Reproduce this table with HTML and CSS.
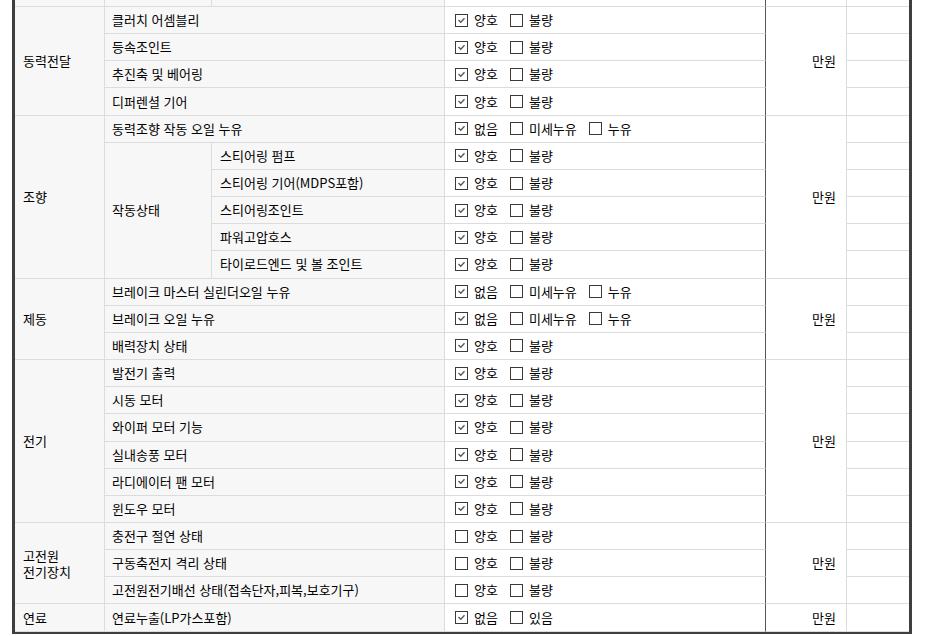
FILE: index.html
```html
<!DOCTYPE html>
<html lang="ko">
<head>
<meta charset="utf-8">
<title>점검표</title>
<link rel="stylesheet" href="styles.css">
</head>
<body>
<div class="wrap">
<table class="sheet">
  <colgroup>
    <col class="c1"><col class="c2"><col class="c3"><col class="c4"><col class="c5"><col class="c6">
  </colgroup>
  <tbody>
    <tr class="toprow">
      <td class="th"></td><td class="th"></td><td class="th"></td><td class="chk"></td><td class="cost"></td><td class="last"></td>
    </tr>

    <tr>
      <td class="th cat" rowspan="4">동력전달</td>
      <td class="th sub" colspan="2">클러치 어셈블리</td>
      <td class="chk"><div class="opts"><span class="opt"><span class="box on"><svg viewBox="0 0 11 11"><polyline points="2.5,5 4.8,7.3 8.5,3.3"/></svg></span>양호</span><span class="opt"><span class="box"></span>불량</span></div></td>
      <td class="cost" rowspan="4">만원</td>
      <td class="last"></td>
    </tr>
    <tr>
      <td class="th sub" colspan="2">등속조인트</td>
      <td class="chk"><div class="opts"><span class="opt"><span class="box on"><svg viewBox="0 0 11 11"><polyline points="2.5,5 4.8,7.3 8.5,3.3"/></svg></span>양호</span><span class="opt"><span class="box"></span>불량</span></div></td>
      <td class="last"></td>
    </tr>
    <tr>
      <td class="th sub" colspan="2">추진축 및 베어링</td>
      <td class="chk"><div class="opts"><span class="opt"><span class="box on"><svg viewBox="0 0 11 11"><polyline points="2.5,5 4.8,7.3 8.5,3.3"/></svg></span>양호</span><span class="opt"><span class="box"></span>불량</span></div></td>
      <td class="last"></td>
    </tr>
    <tr>
      <td class="th sub" colspan="2">디퍼렌셜 기어</td>
      <td class="chk"><div class="opts"><span class="opt"><span class="box on"><svg viewBox="0 0 11 11"><polyline points="2.5,5 4.8,7.3 8.5,3.3"/></svg></span>양호</span><span class="opt"><span class="box"></span>불량</span></div></td>
      <td class="last"></td>
    </tr>

    <tr>
      <td class="th cat" rowspan="6">조향</td>
      <td class="th sub" colspan="2">동력조향 작동 오일 누유</td>
      <td class="chk"><div class="opts"><span class="opt"><span class="box on"><svg viewBox="0 0 11 11"><polyline points="2.5,5 4.8,7.3 8.5,3.3"/></svg></span>없음</span><span class="opt"><span class="box"></span>미세누유</span><span class="opt"><span class="box"></span>누유</span></div></td>
      <td class="cost" rowspan="6">만원</td>
      <td class="last"></td>
    </tr>
    <tr>
      <td class="th sub" rowspan="5">작동상태</td>
      <td class="th item">스티어링 펌프</td>
      <td class="chk"><div class="opts"><span class="opt"><span class="box on"><svg viewBox="0 0 11 11"><polyline points="2.5,5 4.8,7.3 8.5,3.3"/></svg></span>양호</span><span class="opt"><span class="box"></span>불량</span></div></td>
      <td class="last"></td>
    </tr>
    <tr>
      <td class="th item">스티어링 기어(MDPS포함)</td>
      <td class="chk"><div class="opts"><span class="opt"><span class="box on"><svg viewBox="0 0 11 11"><polyline points="2.5,5 4.8,7.3 8.5,3.3"/></svg></span>양호</span><span class="opt"><span class="box"></span>불량</span></div></td>
      <td class="last"></td>
    </tr>
    <tr>
      <td class="th item">스티어링조인트</td>
      <td class="chk"><div class="opts"><span class="opt"><span class="box on"><svg viewBox="0 0 11 11"><polyline points="2.5,5 4.8,7.3 8.5,3.3"/></svg></span>양호</span><span class="opt"><span class="box"></span>불량</span></div></td>
      <td class="last"></td>
    </tr>
    <tr>
      <td class="th item">파워고압호스</td>
      <td class="chk"><div class="opts"><span class="opt"><span class="box on"><svg viewBox="0 0 11 11"><polyline points="2.5,5 4.8,7.3 8.5,3.3"/></svg></span>양호</span><span class="opt"><span class="box"></span>불량</span></div></td>
      <td class="last"></td>
    </tr>
    <tr>
      <td class="th item">타이로드엔드 및 볼 조인트</td>
      <td class="chk"><div class="opts"><span class="opt"><span class="box on"><svg viewBox="0 0 11 11"><polyline points="2.5,5 4.8,7.3 8.5,3.3"/></svg></span>양호</span><span class="opt"><span class="box"></span>불량</span></div></td>
      <td class="last"></td>
    </tr>

    <tr>
      <td class="th cat" rowspan="3">제동</td>
      <td class="th sub" colspan="2">브레이크 마스터 실린더오일 누유</td>
      <td class="chk"><div class="opts"><span class="opt"><span class="box on"><svg viewBox="0 0 11 11"><polyline points="2.5,5 4.8,7.3 8.5,3.3"/></svg></span>없음</span><span class="opt"><span class="box"></span>미세누유</span><span class="opt"><span class="box"></span>누유</span></div></td>
      <td class="cost" rowspan="3">만원</td>
      <td class="last"></td>
    </tr>
    <tr>
      <td class="th sub" colspan="2">브레이크 오일 누유</td>
      <td class="chk"><div class="opts"><span class="opt"><span class="box on"><svg viewBox="0 0 11 11"><polyline points="2.5,5 4.8,7.3 8.5,3.3"/></svg></span>없음</span><span class="opt"><span class="box"></span>미세누유</span><span class="opt"><span class="box"></span>누유</span></div></td>
      <td class="last"></td>
    </tr>
    <tr>
      <td class="th sub" colspan="2">배력장치 상태</td>
      <td class="chk"><div class="opts"><span class="opt"><span class="box on"><svg viewBox="0 0 11 11"><polyline points="2.5,5 4.8,7.3 8.5,3.3"/></svg></span>양호</span><span class="opt"><span class="box"></span>불량</span></div></td>
      <td class="last"></td>
    </tr>

    <tr>
      <td class="th cat" rowspan="6">전기</td>
      <td class="th sub" colspan="2">발전기 출력</td>
      <td class="chk"><div class="opts"><span class="opt"><span class="box on"><svg viewBox="0 0 11 11"><polyline points="2.5,5 4.8,7.3 8.5,3.3"/></svg></span>양호</span><span class="opt"><span class="box"></span>불량</span></div></td>
      <td class="cost" rowspan="6">만원</td>
      <td class="last"></td>
    </tr>
    <tr>
      <td class="th sub" colspan="2">시동 모터</td>
      <td class="chk"><div class="opts"><span class="opt"><span class="box on"><svg viewBox="0 0 11 11"><polyline points="2.5,5 4.8,7.3 8.5,3.3"/></svg></span>양호</span><span class="opt"><span class="box"></span>불량</span></div></td>
      <td class="last"></td>
    </tr>
    <tr>
      <td class="th sub" colspan="2">와이퍼 모터 기능</td>
      <td class="chk"><div class="opts"><span class="opt"><span class="box on"><svg viewBox="0 0 11 11"><polyline points="2.5,5 4.8,7.3 8.5,3.3"/></svg></span>양호</span><span class="opt"><span class="box"></span>불량</span></div></td>
      <td class="last"></td>
    </tr>
    <tr>
      <td class="th sub" colspan="2">실내송풍 모터</td>
      <td class="chk"><div class="opts"><span class="opt"><span class="box on"><svg viewBox="0 0 11 11"><polyline points="2.5,5 4.8,7.3 8.5,3.3"/></svg></span>양호</span><span class="opt"><span class="box"></span>불량</span></div></td>
      <td class="last"></td>
    </tr>
    <tr>
      <td class="th sub" colspan="2">라디에이터 팬 모터</td>
      <td class="chk"><div class="opts"><span class="opt"><span class="box on"><svg viewBox="0 0 11 11"><polyline points="2.5,5 4.8,7.3 8.5,3.3"/></svg></span>양호</span><span class="opt"><span class="box"></span>불량</span></div></td>
      <td class="last"></td>
    </tr>
    <tr>
      <td class="th sub" colspan="2">윈도우 모터</td>
      <td class="chk"><div class="opts"><span class="opt"><span class="box on"><svg viewBox="0 0 11 11"><polyline points="2.5,5 4.8,7.3 8.5,3.3"/></svg></span>양호</span><span class="opt"><span class="box"></span>불량</span></div></td>
      <td class="last"></td>
    </tr>

    <tr>
      <td class="th cat" rowspan="3"><span class="two">고전원<br>전기장치</span></td>
      <td class="th sub" colspan="2">충전구 절연 상태</td>
      <td class="chk"><div class="opts"><span class="opt"><span class="box"></span>양호</span><span class="opt"><span class="box"></span>불량</span></div></td>
      <td class="cost" rowspan="3">만원</td>
      <td class="last"></td>
    </tr>
    <tr>
      <td class="th sub" colspan="2">구동축전지 격리 상태</td>
      <td class="chk"><div class="opts"><span class="opt"><span class="box"></span>양호</span><span class="opt"><span class="box"></span>불량</span></div></td>
      <td class="last"></td>
    </tr>
    <tr>
      <td class="th sub" colspan="2">고전원전기배선 상태(접속단자,피복,보호기구)</td>
      <td class="chk"><div class="opts"><span class="opt"><span class="box"></span>양호</span><span class="opt"><span class="box"></span>불량</span></div></td>
      <td class="last"></td>
    </tr>

    <tr>
      <td class="th cat">연료</td>
      <td class="th sub" colspan="2">연료누출(LP가스포함)</td>
      <td class="chk"><div class="opts"><span class="opt"><span class="box on"><svg viewBox="0 0 11 11"><polyline points="2.5,5 4.8,7.3 8.5,3.3"/></svg></span>없음</span><span class="opt"><span class="box"></span>있음</span></div></td>
      <td class="cost">만원</td>
      <td class="last"></td>
    </tr>
  </tbody>
</table>
</div>
</body>
</html>
```

FILE: styles.css
```css
html, body {
  margin: 0;
  padding: 0;
  background: #ffffff;
}

body {
  font-family: "Noto Sans CJK KR", "Noto Sans", sans-serif;
  font-size: 13px;
  color: #000000;
  overflow: hidden;
}

.wrap {
  padding-left: 12px;
  margin-top: -20px;
}

.sheet {
  table-layout: fixed;
  width: 900px;
  border-collapse: separate;
  border-spacing: 0;
  border-left: 3px solid #3e3e42;
  border-right: 3px solid #3e3e42;
  border-bottom: 2px solid #3e3e42;
}

.c1 { width: 90px; }
.c2 { width: 107px; }
.c3 { width: 233px; }
.c4 { width: 321px; }
.c5 { width: 81px; }
.c6 { width: 62px; }

.sheet tr {
  height: 27.17px;
}

.sheet tr.toprow {
  height: 27px;
}

.sheet td {
  padding: 0;
  border-right: 1px solid #dcdcdc;
  border-bottom: 1px solid #dcdcdc;
  vertical-align: middle;
  white-space: nowrap;
  line-height: 16px;
  background: #ffffff;
}

.sheet td.th {
  background: #f7f7f7;
}

.sheet td.cat {
  padding-left: 8px;
}

.sheet td.sub {
  padding-left: 7px;
}

.sheet td.item {
  padding-left: 8px;
}

.sheet td.chk {
  border-right: 1px solid #555555;
  padding-left: 10px;
}

.sheet td.cost {
  text-align: right;
  padding-right: 10px;
}

.sheet td.last {
  border-right: none;
}

.two {
  display: inline-block;
  line-height: 16px;
  padding-top: 1px;
}

.opts {
  display: flex;
  align-items: center;
  gap: 12px;
}

.opt {
  display: inline-flex;
  align-items: center;
  gap: 6px;
}

.box {
  display: inline-block;
  box-sizing: border-box;
  width: 13px;
  height: 13px;
  border: 1px solid #3a3a3a;
  background: #ffffff;
}

.box svg {
  display: block;
  width: 11px;
  height: 11px;
}

.box svg polyline {
  fill: none;
  stroke: #555555;
  stroke-width: 1.3;
}
```
